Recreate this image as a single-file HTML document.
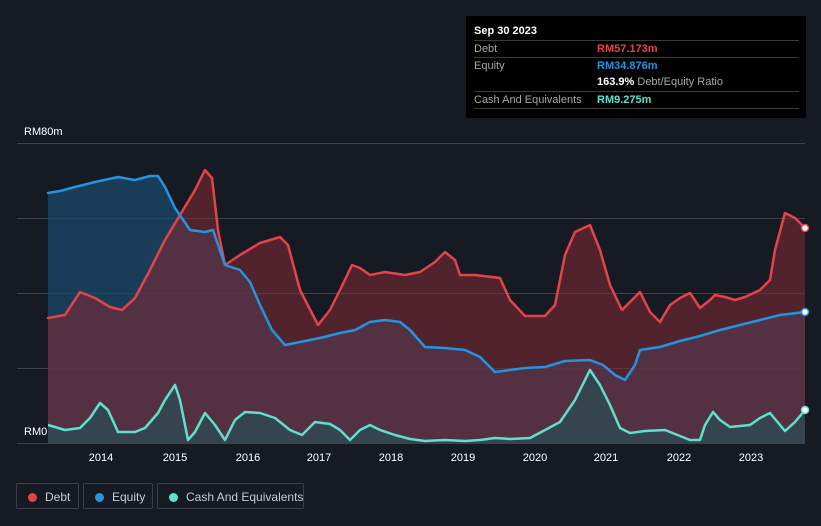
<!DOCTYPE html><html><head><style>
body{margin:0;width:821px;height:526px;background:#151a23;font-family:"Liberation Sans",sans-serif;overflow:hidden;position:relative}
.tt{position:absolute;left:466px;top:16px;width:340px;height:102px;background:#000;color:#fff;font-size:11px}
.tt .r{position:absolute;left:8px;width:325px;border-top:1px solid #3a3a3a;height:17px;line-height:17px;color:#a8a8a8;white-space:nowrap}
.tt .v{position:absolute;left:123px;font-weight:bold}
.lg{position:absolute;top:483px;height:26px;border:1px solid #3a404b;border-radius:2px;color:#c8ccd2;font-size:12px;line-height:26px;box-sizing:border-box;white-space:nowrap}
.lg i{position:absolute;left:11px;top:9px;width:9px;height:9px;border-radius:50%}
.lg span{position:absolute;left:28px}
</style></head><body>
<svg width="821" height="526" style="position:absolute;left:0;top:0">
<g stroke="#3c424d" stroke-width="1">
<line x1="17" y1="143.5" x2="805" y2="143.5"/><line x1="17" y1="218.5" x2="805" y2="218.5"/><line x1="17" y1="293.5" x2="805" y2="293.5"/><line x1="17" y1="368.5" x2="805" y2="368.5"/><line x1="17" y1="443.5" x2="805" y2="443.5"/>
</g>
<polygon fill="#1c4a6a" fill-opacity="0.75" points="48,443 48,193 60,191 75,187 95,182 118,177 135,180 150,176 158,176 165,187 175,208 190,230 205,232 213,230 225,265 240,270 250,282 260,305 272,330 285,345 300,342 320,338 340,333 355,330 370,322 385,320 400,322 410,330 425,347 445,348 465,350 480,357 495,372 510,370 525,368 545,367 565,361 590,360 603,365 615,375 625,380 635,365 640,350 660,347 680,341 700,336 720,330 740,325 760,320 780,315 805,312 805,443"/>
<polygon fill="#7a2a33" fill-opacity="0.6" points="48,443 48,318 65,315 80,292 95,298 110,307 122,310 135,298 150,270 165,240 180,215 195,190 205,170 212,178 218,230 225,265 240,255 260,243 280,237 288,245 300,290 318,325 330,310 340,290 352,265 360,268 370,275 385,272 405,275 420,272 435,262 445,252 455,260 460,275 475,275 500,278 510,300 525,316 545,316 555,305 565,255 575,232 590,225 600,250 610,285 622,310 632,300 640,292 650,312 660,322 670,305 680,298 690,293 700,308 710,300 715,295 725,297 735,300 745,297 760,290 770,280 775,250 785,213 795,218 805,228 805,443"/>
<polygon fill="#2f4a52" fill-opacity="0.8" points="48,443 48,425 65,430 80,428 90,418 100,403 108,410 118,432 135,432 145,428 158,413 165,400 175,385 180,400 188,440 195,432 205,413 215,425 225,440 235,420 245,412 260,413 275,418 290,430 302,435 315,422 330,424 340,430 350,440 360,430 370,425 380,430 395,435 410,439 425,441 445,440 465,441 480,440 495,438 510,439 530,438 545,430 560,422 575,400 590,370 600,385 610,405 620,428 630,433 645,431 665,430 680,436 690,440 700,440 705,425 713,412 720,420 730,427 750,425 760,418 770,413 780,425 785,431 795,422 805,410 805,443"/>
<g fill="none" stroke-width="2.5" stroke-linejoin="round" stroke-linecap="round">
<polyline stroke="#e5434a" points="48,318 65,315 80,292 95,298 110,307 122,310 135,298 150,270 165,240 180,215 195,190 205,170 212,178 218,230 225,265 240,255 260,243 280,237 288,245 300,290 318,325 330,310 340,290 352,265 360,268 370,275 385,272 405,275 420,272 435,262 445,252 455,260 460,275 475,275 500,278 510,300 525,316 545,316 555,305 565,255 575,232 590,225 600,250 610,285 622,310 632,300 640,292 650,312 660,322 670,305 680,298 690,293 700,308 710,300 715,295 725,297 735,300 745,297 760,290 770,280 775,250 785,213 795,218 805,228"/>
<polyline stroke="#2394e0" points="48,193 60,191 75,187 95,182 118,177 135,180 150,176 158,176 165,187 175,208 190,230 205,232 213,230 225,265 240,270 250,282 260,305 272,330 285,345 300,342 320,338 340,333 355,330 370,322 385,320 400,322 410,330 425,347 445,348 465,350 480,357 495,372 510,370 525,368 545,367 565,361 590,360 603,365 615,375 625,380 635,365 640,350 660,347 680,341 700,336 720,330 740,325 760,320 780,315 805,312"/>
<polyline stroke="#5fe0cc" points="48,425 65,430 80,428 90,418 100,403 108,410 118,432 135,432 145,428 158,413 165,400 175,385 180,400 188,440 195,432 205,413 215,425 225,440 235,420 245,412 260,413 275,418 290,430 302,435 315,422 330,424 340,430 350,440 360,430 370,425 380,430 395,435 410,439 425,441 445,440 465,441 480,440 495,438 510,439 530,438 545,430 560,422 575,400 590,370 600,385 610,405 620,428 630,433 645,431 665,430 680,436 690,440 700,440 705,425 713,412 720,420 730,427 750,425 760,418 770,413 780,425 785,431 795,422 805,410"/>
</g>
<circle cx="805" cy="228" r="3.5" fill="#fff" stroke="#e5434a" stroke-width="1.5"/>
<circle cx="805" cy="312" r="3.5" fill="#fff" stroke="#2394e0" stroke-width="1.5"/>
<circle cx="805" cy="410" r="3.5" fill="#fff" stroke="#5fe0cc" stroke-width="1.5"/>
<rect x="17" y="420" width="31" height="22" fill="#151a23"/>
<g fill="#fff" font-size="11" font-family="Liberation Sans,sans-serif">
<text x="24" y="135">RM80m</text><text x="24" y="435">RM0</text>
<g text-anchor="middle"><text x="101" y="461">2014</text><text x="175" y="461">2015</text><text x="248" y="461">2016</text><text x="319" y="461">2017</text><text x="391" y="461">2018</text><text x="463" y="461">2019</text><text x="535" y="461">2020</text><text x="606" y="461">2021</text><text x="679" y="461">2022</text><text x="751" y="461">2023</text></g>
</g>
</svg>
<div class="tt">
<div style="position:absolute;left:8px;top:9px;font-weight:bold">Sep 30 2023</div>
<div class="r" style="top:24px">Debt<span class="v" style="color:#e5434a">RM57.173m</span></div>
<div class="r" style="top:41px">Equity<span class="v" style="color:#2394e0">RM34.876m</span></div>
<div class="r" style="top:58px;border-top:none"><span class="v" style="color:#fff">163.9% <span style="font-weight:normal;color:#a8a8a8">Debt/Equity Ratio</span></span></div>
<div class="r" style="top:75px">Cash And Equivalents<span class="v" style="color:#5fe0cc">RM9.275m</span></div>
<div class="r" style="top:92px;height:0"></div>
</div>
<div class="lg" style="left:16px;width:63px"><i style="background:#e5434a"></i><span>Debt</span></div>
<div class="lg" style="left:83px;width:70px"><i style="background:#2394e0"></i><span>Equity</span></div>
<div class="lg" style="left:157px;width:147px"><i style="background:#5fe0cc"></i><span>Cash And Equivalents</span></div>
</body></html>
